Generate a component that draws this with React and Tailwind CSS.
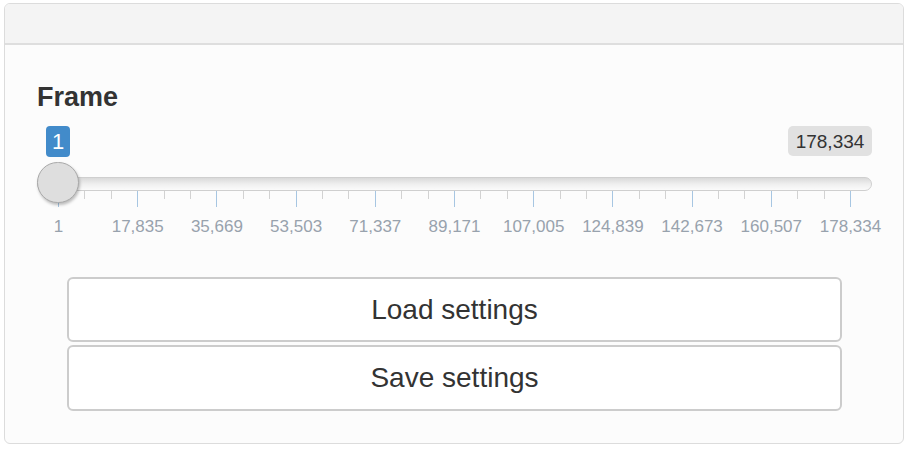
const ticks = [
  "1",
  "17,835",
  "35,669",
  "53,503",
  "71,337",
  "89,171",
  "107,005",
  "124,839",
  "142,673",
  "160,507",
  "178,334",
];

const STEP = 79.2;

function FrameSlider() {
  return (
    <div className="relative h-[110px] w-[835px]">
      {/* value badges */}
      <div className="absolute left-[9px] top-0 flex h-[31px] w-[24px] items-center justify-center rounded-[4px] bg-[#428bca] text-[22px] leading-none text-white">
        1
      </div>
      <div className="absolute right-0 top-0 flex h-[30px] w-[84px] items-center justify-center rounded-[5px] bg-[#e1e1e1] text-[19px] leading-none text-[#333]">
        178,334
      </div>

      {/* track */}
      <div className="absolute left-0 right-0 top-[51px] h-[14px] rounded-full border border-[#cfcfcf] bg-gradient-to-b from-[#dadada] via-[#efefef] to-[#fbfbfb]" />

      {/* grid */}
      {ticks.map((t, i) => {
        const x = 21 + i * STEP;
        return (
          <div key={t}>
            <div
              className="absolute top-[65px] h-[16px] w-px bg-[#a7c6e2]"
              style={{ left: x }}
            />
            {i < ticks.length - 1 &&
              [1, 2].map((k) => (
                <div
                  key={k}
                  className="absolute top-[65px] h-[8px] w-px bg-[#d2d2d2]"
                  style={{ left: x + (k * STEP) / 3 }}
                />
              ))}
            <div
              className="absolute top-[92px] -translate-x-1/2 whitespace-nowrap text-[17px] leading-[17px] text-[#98a2ad]"
              style={{ left: x + 0.5 }}
            >
              {t}
            </div>
          </div>
        );
      })}

      {/* handle */}
      <div className="absolute left-0 top-[36px] h-[41px] w-[42px] rounded-full border border-[#a9a9a9] bg-[#dedede] shadow-[1px_2px_3px_rgba(0,0,0,0.25)]" />
    </div>
  );
}

export default function App() {
  return (
    <div
      className="h-[450px] w-[908px] bg-white pl-[4px] pt-[3px]"
      style={{ fontFamily: '"Liberation Sans", Arial, sans-serif' }}
    >
      <div className="flex h-[441px] w-[900px] flex-col overflow-hidden rounded-[6px] border border-[#dcdcdc] bg-[#fcfcfc]">
        <div className="h-[41px] border-b-2 border-[#dedede] bg-[#f4f4f4]" />
        <div className="flex flex-col pl-[32px] pt-[39px]">
          <div className="text-[27px] font-bold leading-[27px] text-[#333]">
            Frame
          </div>
          <div className="mt-[15px]">
            <FrameSlider />
          </div>
          <div className="ml-[30px] mt-[41px] flex w-[775px] flex-col gap-[3px]">
            <button className="h-[65px] rounded-[6px] border-2 border-[#cccccc] bg-white text-[28px] text-[#333]">
              Load settings
            </button>
            <button className="h-[66px] rounded-[6px] border-2 border-[#cccccc] bg-white text-[28px] text-[#333]">
              Save settings
            </button>
          </div>
        </div>
      </div>
    </div>
  );
}
